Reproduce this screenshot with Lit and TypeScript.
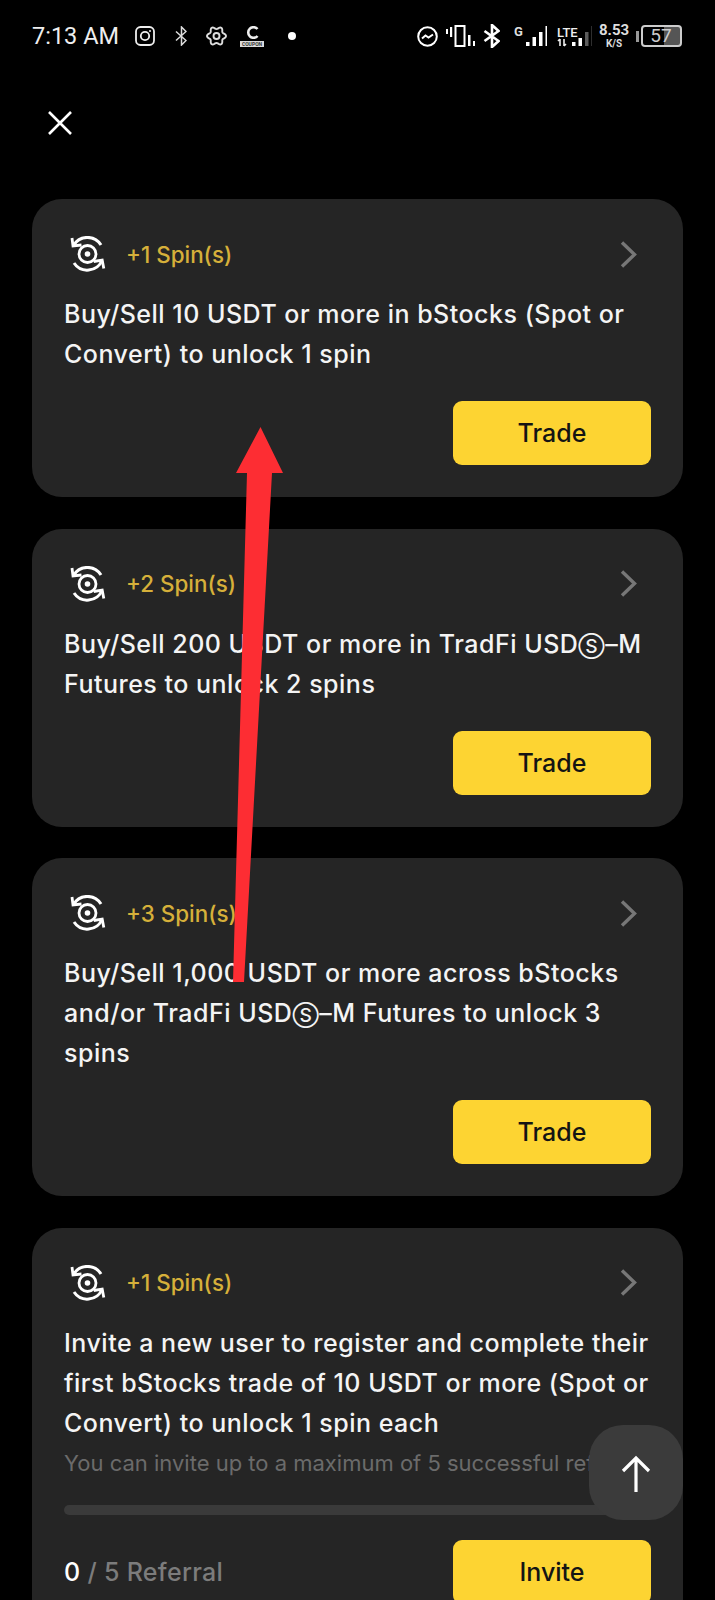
import { LitElement, css, html, svg } from 'lit';
import { customElement, property } from 'lit/decorators.js';

const spinIcon = html`<svg class="spin-icon" viewBox="0 0 36 36" fill="none" stroke="#fff" stroke-width="3">
  <circle cx="17.500" cy="18" r="8.500" stroke-width="2.800"></circle>
  <circle cx="17.500" cy="18" r="2.800" fill="#fff" stroke="none"></circle>
  <path d="M3.500 9.500A16 16 0 0 1 31 9"></path>
  <path d="M32 24.500A16 16 0 0 1 4 27"></path>
  <path d="M2 2l1 8 8.500-1M33.800 32.500L32.200 24l-8.500 1.500" stroke-width="2.800"></path>
</svg>`;

const chevron = html`<svg class="chevron" viewBox="0 0 17 27" fill="none" stroke="#777" stroke-width="3.400">
  <path d="M2 1.500l12.500 12L2 25.500"></path>
</svg>`;

// signal bars bottom aligned to y=20, the last `dim` ones are grey
const bars = (heights: number[], dim = 0) =>
  svg`${heights.map(
    (h, i) =>
      svg`<rect x=${i * 6.5} y=${20 - h} width="3.500" height=${h} fill=${i >= heights.length - dim ? '#5c5c5c' : '#fff'}></rect>`,
  )}`;

// six lobed outline of the settings icon
const gearPath = () => {
  const pts: string[] = [];
  for (let i = 0; i < 72; i++) {
    const a = (i / 72) * Math.PI * 2;
    const r = 8.2 + 1.3 * Math.cos(6 * a);
    pts.push(`${(10.5 + r * Math.cos(a)).toFixed(2)} ${(10 + r * Math.sin(a)).toFixed(2)}`);
  }
  return `M${pts.join('L')}Z`;
};

@customElement('task-card')
export class TaskCard extends LitElement {
  @property({ type: String }) spins = '+1 Spin(s)';
  @property({ type: String }) text = '';

  static styles = css`
    :host {
      display: block;
      background: #252525;
      border-radius: 30px;
      padding: 35px 32px 32px;
    }
    .head {
      display: flex;
      align-items: center;
      height: 40px;
    }
    .spin-icon {
      width: 36px;
      height: 36px;
      margin-left: 6px;
    }
    .spins {
      margin-left: 20px;
      color: #d6b03a;
      font-size: 22.400px;
      font-weight: 500;
      flex: 1;
    }
    .chevron {
      width: 17px;
      height: 27px;
      margin-right: 14px;
    }
    .desc {
      margin: 20px 0 0;
      color: #f4f4f4;
      font-size: 25px;
      letter-spacing: 0.5px;
      font-weight: 500;
      line-height: 40px;
    }
    .reg {
      font-size: 19px;
      line-height: 1;
    }
    .foot {
      margin-top: 27px;
      display: flex;
      align-items: center;
      justify-content: flex-end;
    }
    :host([invite]) .foot {
      margin-top: 25px;
      justify-content: space-between;
    }
    button {
      width: 198px;
      height: 64px;
      border: none;
      border-radius: 9px;
      background: #fdd432;
      color: #141414;
      font: inherit;
      font-size: 25px;
      font-weight: 500;
      padding: 0;
    }
  `;

  render() {
    const parts = this.text.split('Ⓢ');
    return html`
      <div class="head">${spinIcon}<span class="spins">${this.spins}</span>${chevron}</div>
      <p class="desc">
        ${parts.map((p, i) => (i === 0 ? p : html`<span class="reg">Ⓢ</span>${p}`))}
      </p>
      <slot name="extra"></slot>
      <div class="foot">
        <slot name="count"></slot>
        <button type="button"><slot name="action">Trade</slot></button>
      </div>
    `;
  }
}

@customElement('app-root')
export class AppRoot extends LitElement {
  static styles = css`
    :host {
      display: block;
      position: relative;
      height: 1600px;
      overflow: hidden;
      background: #000;
      color: #fff;
      font-family: Inter, 'Liberation Sans', sans-serif;
    }
    .status {
      display: flex;
      align-items: center;
      height: 72px;
      padding: 0 33px 0 32px;
      font-family: Roboto, sans-serif;
    }
    .status svg {
      display: block;
      flex: none;
    }
    .time {
      width: 86px;
      white-space: nowrap;
      font-size: 23.500px;
      color: #eee;
      margin-right: 17px;
    }
    .ig {
      margin-right: 20px;
    }
    .bt {
      margin-right: 19px;
    }
    .gear {
      margin-right: 13px;
    }
    .dot {
      width: 8px;
      height: 8px;
      border-radius: 50%;
      background: #fff;
      margin-left: 24px;
    }
    .coupon {
      display: flex;
      flex-direction: column;
      align-items: center;
      width: 24px;
    }
    .coupon b {
      display: block;
      width: 24px;
      height: 6px;
      margin-top: 2px;
      background: #ddd;
      color: #333;
      font-size: 5px;
      line-height: 6px;
      text-align: center;
      font-weight: 700;
    }
    .right {
      margin-left: auto;
      display: flex;
      align-items: center;
    }
    .right > * {
      margin-right: 8px;
    }
    .right > .bt2 {
      margin-right: 14px;
    }
    .right > .g {
      margin-right: 10px;
    }
    .net {
      display: flex;
      flex-direction: column;
      align-items: center;
      width: 28px;
      line-height: 1;
      font-size: 15px;
      font-weight: 700;
      color: #ddd;
    }
    .net small {
      font-size: 10px;
      margin-top: 1px;
    }
    .right > .battery {
      display: flex;
      align-items: center;
      gap: 2px;
      margin-right: 0;
    }
    .battery i {
      display: block;
      width: 3px;
      height: 11px;
      background: #999;
    }
    .cell {
      width: 36px;
      height: 18px;
      border: 2px solid #ccc;
      border-radius: 4px;
      padding-right: 1px;
      text-align: center;
      font-size: 19px;
      line-height: 18px;
      color: #ccc;
      background: linear-gradient(90deg, transparent 58%, #555 58%);
    }
    .close {
      display: block;
      width: 26px;
      height: 26px;
      margin: 38px 0 0 47px;
    }
    .cards {
      display: flex;
      flex-direction: column;
      gap: 31.600px;
      padding: 0 32px;
      margin-top: 63px;
    }
    .note {
      margin-top: 6px;
      color: #6b6b6b;
      font-size: 22px;
      line-height: 28px;
      white-space: nowrap;
    }
    .track {
      height: 10px;
      margin-top: 28px;
      border-radius: 5px;
      background: #3a3a3a;
    }
    .count {
      font-size: 25px;
      font-weight: 500;
      letter-spacing: 0.3px;
      color: #7c7c7c;
    }
    .count b {
      color: #fff;
      font-weight: 500;
    }
    .fab {
      position: absolute;
      left: 589px;
      top: 1425px;
      width: 94px;
      height: 95px;
      border-radius: 34px;
      background: #3b3b3b;
      display: flex;
      align-items: center;
      justify-content: center;
    }
    .fab svg {
      width: 32px;
      height: 38px;
      margin-top: 2px;
    }
    .mark {
      position: absolute;
      left: 0;
      top: 0;
      width: 715px;
      height: 1600px;
      pointer-events: none;
    }
  `;

  render() {
    return html`
      <div class="status">
        <span class="time">7:13 AM</span>
        <svg class="ig" width="20" height="20" viewBox="0 0 20 20" fill="none" stroke="#eee" stroke-width="1.800">
          <rect x="1" y="1" width="18" height="18" rx="4.500"></rect>
          <circle cx="10" cy="10" r="4.200"></circle>
          <circle cx="15" cy="5" r="1" fill="#eee" stroke="none"></circle>
        </svg>
        <svg class="bt" width="12" height="20" viewBox="0 0 12 20" fill="none" stroke="#ddd" stroke-width="1.500">
          <path d="M1 5.500l10 9-4.500 4.500V1L11 5.500l-10 9"></path>
        </svg>
        <svg class="gear" width="21" height="20" viewBox="0 0 21 20" fill="none" stroke="#ddd" stroke-width="1.900">
          <path d=${gearPath()}></path>
          <circle cx="10.500" cy="10" r="3"></circle>
        </svg>
        <div class="coupon">
          <svg width="15" height="13" viewBox="0 0 15 13" fill="none" stroke="#eee" stroke-width="2.600">
            <path d="M12.500 3A5.300 5.300 0 1 0 12.500 10"></path>
          </svg>
          <b>COUPON</b>
        </div>
        <span class="dot"></span>

        <div class="right">
          <svg width="21" height="21" viewBox="0 0 21 21" fill="none" stroke="#fff" stroke-width="2">
            <circle cx="10.500" cy="10.500" r="9.300"></circle>
            <path d="M5 12.500l3.500-3 3 2 4.500-3"></path>
          </svg>
          <svg width="29" height="22" viewBox="0 0 29 22" fill="#fff">
            <rect x="0" y="4" width="2" height="5"></rect>
            <rect x="4" y="2" width="2.200" height="10"></rect>
            <rect x="9.500" y="1" width="9" height="20" fill="none" stroke="#fff" stroke-width="2"></rect>
            <rect x="22" y="10" width="2.500" height="11"></rect>
            <rect x="27" y="16" width="2" height="5"></rect>
          </svg>
          <svg class="bt2" width="17" height="24" viewBox="0 0 17 24" fill="none" stroke="#fff" stroke-width="2.600">
            <path d="M1.500 7l14 10-6.500 6V1l6.500 6-14 10"></path>
          </svg>
          <svg class="g" width="33" height="22" viewBox="0 0 33 22" fill="#ddd">
            <text x="0" y="11" font-size="13" font-weight="700">G</text>
            <g transform="translate(12 1)">${bars([4, 9, 14, 20])}</g>
          </svg>
          <svg width="35" height="22" viewBox="0 0 35 22" fill="#eee">
            <text x="0" y="12" font-size="13" font-weight="500">LTE</text>
            <path d="M3 14v7M1 16l2-2M7 14v7M9 19l-2 2" stroke="#eee" stroke-width="1.600" fill="none"></path>
            <g transform="translate(15 1)">${bars([4, 8, 14, 20], 2)}</g>
          </svg>
          <div class="net"><span>8.53</span><small>K/S</small></div>
          <div class="battery"><i></i><div class="cell">57</div></div>
        </div>
      </div>

      <svg class="close" viewBox="0 0 26 26" fill="none" stroke="#fff" stroke-width="2.600">
        <path d="M2 2l22 22M24 2L2 24"></path>
      </svg>

      <div class="cards">
        <task-card text="Buy/Sell 10 USDT or more in bStocks (Spot or Convert) to unlock 1 spin"></task-card>
        <task-card spins="+2 Spin(s)" text="Buy/Sell 200 USDT or more in TradFi USDⓈ–M Futures to unlock 2 spins"></task-card>
        <task-card spins="+3 Spin(s)" text="Buy/Sell 1,000 USDT or more across bStocks and/or TradFi USDⓈ–M Futures to unlock 3 spins"></task-card>
        <task-card invite text="Invite a new user to register and complete their first bStocks trade of 10 USDT or more (Spot or Convert) to unlock 1 spin each">
          <div slot="extra">
            <div class="note">You can invite up to a maximum of 5 successful referrals</div>
            <div class="track"></div>
          </div>
          <div slot="count" class="count"><b>0</b> / 5 Referral</div>
          <span slot="action">Invite</span>
        </task-card>
      </div>

      <div class="fab">
        <svg viewBox="0 0 32 38" fill="none" stroke="#fff" stroke-width="3.200">
          <path d="M16 37V3M3 16L16 3l13 13"></path>
        </svg>
      </div>

      <svg class="mark" viewBox="0 0 715 1600">
        <path d="M260.500 427L283 473H272L244 982H233L247 473H236Z" fill="#fd2d33"></path>
      </svg>
    `;
  }
}
